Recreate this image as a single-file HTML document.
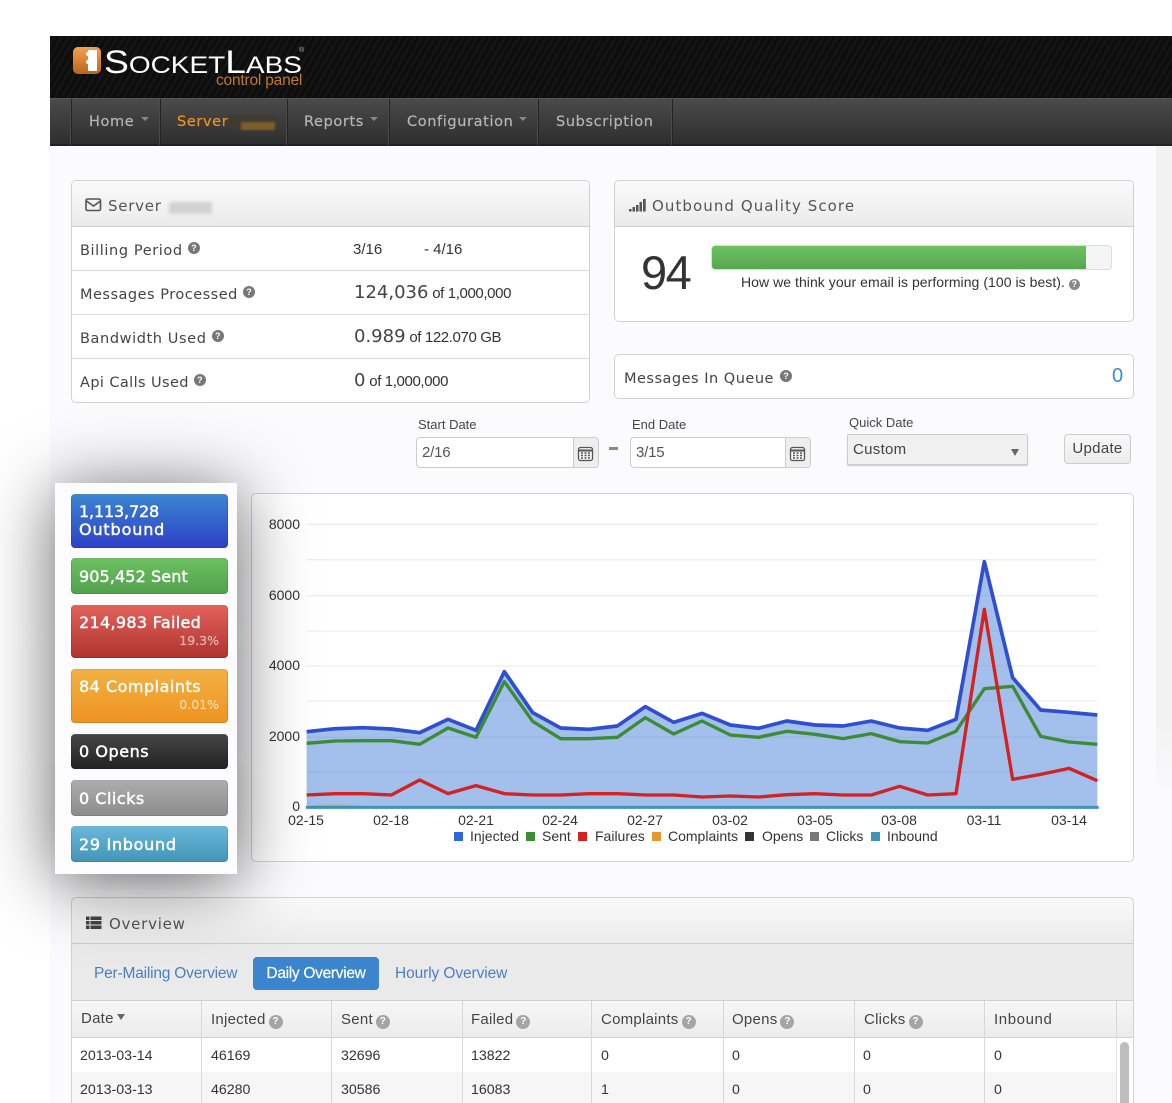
<!DOCTYPE html>
<html><head><meta charset="utf-8"><title>SocketLabs</title>
<style>
*{box-sizing:border-box}
html,body{margin:0;padding:0;background:#fff}
#p{position:relative;width:1172px;height:1103px;overflow:hidden;background:#fff;font-family:"Liberation Sans",sans-serif;color:#333;filter:blur(.3px)}
#p div,#p span.a{position:absolute}
.panel{background:#fff;border:1px solid #d2d2d2;border-radius:5px}
.ph{left:0;right:0;top:0;height:46px;background:linear-gradient(#fafafa,#ebebeb);border-bottom:1px solid #ccc;border-radius:5px 5px 0 0}
.t{white-space:nowrap}
.h{font-family:"DejaVu Sans",sans-serif;font-size:15px;color:#555;letter-spacing:.75px;white-space:nowrap}
.l{font-family:"DejaVu Sans",sans-serif;font-size:14.5px;color:#444;letter-spacing:.6px;white-space:nowrap}
.v{font-size:15px;color:#333;white-space:nowrap;letter-spacing:-.38px}
.v b{font-family:"DejaVu Sans",sans-serif;font-weight:normal;font-size:18px;color:#444;letter-spacing:0}
.r{height:1px;background:#ddd}
.q{display:inline-block;width:12px;height:12px;border-radius:50%;background:#777;color:#fff;font:bold 9px/12px "Liberation Sans",sans-serif;text-align:center;letter-spacing:0;vertical-align:4px;margin-left:0}
.btn{left:71px;width:157px;border-radius:4px;color:#fff;font:normal 16px/18px "DejaVu Sans",sans-serif;-webkit-text-stroke:.45px #fff;letter-spacing:.1px;padding-left:8px;box-shadow:inset 0 0 0 1px rgba(0,0,0,.1),inset 0 1px 0 rgba(255,255,255,.15);white-space:nowrap}
.pc{right:9px;font:normal 12.5px/14px "DejaVu Sans",sans-serif;-webkit-text-stroke:.2px rgba(255,255,255,.55);letter-spacing:0;color:rgba(255,255,255,.55)}
.nav{top:113px;font:14.5px/18px "DejaVu Sans",sans-serif;letter-spacing:.62px;-webkit-text-stroke:.2px #b5b5b5;color:#b5b5b5;white-space:nowrap}
.sep{top:99px;width:1px;height:46px;background:#232323;box-shadow:-1px 0 0 #4b4b4b}
.car{top:117px;width:0;height:0;border:4px solid transparent;border-top:4px solid #888;border-bottom:0}
.lab{font-size:13px;color:#444;white-space:nowrap}
.inp{background:#fff;border:1px solid #ccc;border-radius:4px;height:31px;font-size:15px;color:#555;line-height:29px;padding-left:5px;letter-spacing:-.2px}
.add{top:0;right:0;bottom:0;width:25px;background:#eee;border-left:1px solid #ccc;border-radius:0 4px 4px 0}
.c{font-size:14.2px;color:#333;white-space:nowrap}
.th{font-size:15px;color:#444;white-space:nowrap;top:1011px;letter-spacing:.25px}
.vl{top:1001px;width:1px;height:102px;background:#d8d8d8}
.qt{display:inline-block;width:14px;height:14px;border-radius:50%;background:#a5a5a5;color:#fff;font:bold 10px/14px "Liberation Sans",sans-serif;text-align:center;letter-spacing:0;vertical-align:0;margin-left:3px}
svg text{font-family:"Liberation Sans",sans-serif}
</style></head><body>
<div id="p">
<div style="left:50px;top:36px;width:1122px;height:1067px;background:#fbfbfd"></div>
<div style="left:1156px;top:146px;width:16px;height:654px;background:linear-gradient(#f2f2f2 88%,#fbfbfd)"></div>

<!-- header -->
<div style="left:50px;top:36px;width:1122px;height:62px;background:repeating-linear-gradient(120deg,#0d0d0d 0 3px,#141414 3px 6px)"></div>
<svg style="position:absolute;left:72px;top:46px" width="31" height="30" viewBox="0 0 31 30"><defs><linearGradient id="o" x1="0" y1="0" x2="0" y2="1"><stop offset="0" stop-color="#f6a050"/><stop offset="1" stop-color="#b9661c"/></linearGradient></defs><rect x="1" y="1" width="28" height="27" rx="5" fill="url(#o)"/><path d="M16 4H25V25H16V18a2 2 0 0 1 0-4V10a2 2 0 0 1 0-4z" fill="#fff"/></svg>
<div class="t" style="left:104px;top:44px;color:#fff;font-size:32px;line-height:36px;font-weight:normal;letter-spacing:0;transform:scaleX(1.165);transform-origin:0 0">S<span style="font-size:24px">OCKET</span>L<span style="font-size:24px">ABS</span></div>
<div class="t" style="left:299px;top:47px;color:#bbb;font-size:7px">®</div>
<div class="t" style="left:216px;top:72px;color:#c07a24;font-size:15.5px;line-height:18px;letter-spacing:-.2px">control panel</div>

<!-- nav -->
<div style="left:50px;top:98px;width:1122px;height:48px;background:linear-gradient(#4a4a4a,#2e2e2e);border-bottom:2px solid #222;border-top:1px solid #555"></div>
<div class="sep" style="left:71px"></div><div class="sep" style="left:160px"></div><div class="sep" style="left:287px"></div><div class="sep" style="left:389px"></div><div class="sep" style="left:538px"></div><div class="sep" style="left:672px"></div>
<div class="nav" style="left:89px">Home</div><div class="car" style="left:141px"></div>
<div class="nav" style="left:177px;color:#f0921e;-webkit-text-stroke:.2px #f0921e">Server</div>
<div style="left:229px;top:115px;width:46px;height:15px;background:#3f3a32;filter:blur(1px)"></div>
<div style="left:241px;top:122px;width:34px;height:8px;background:#7e5f2a;filter:blur(1px)"></div>
<div class="nav" style="left:304px">Reports</div><div class="car" style="left:370px"></div>
<div class="nav" style="left:407px">Configuration</div><div class="car" style="left:519px"></div>
<div class="nav" style="left:556px">Subscription</div>

<!-- server panel -->
<div class="panel" style="left:71px;top:180px;width:519px;height:223px"><div class="ph"></div></div>
<svg style="position:absolute;left:85px;top:198px" width="17" height="14" viewBox="0 0 17 14"><rect x="1" y="1" width="14.5" height="11.5" rx="1.5" fill="none" stroke="#555" stroke-width="1.6"/><path d="M1.5 3l7 5 7-5" fill="none" stroke="#555" stroke-width="1.6"/></svg>
<div class="h" style="left:108px;top:197px">Server</div>
<div style="left:169px;top:202px;width:43px;height:12px;background:#d2d2d2;filter:blur(1.5px)"></div>
<div class="r" style="left:72px;top:270px;width:517px"></div><div class="r" style="left:72px;top:314px;width:517px"></div><div class="r" style="left:72px;top:358px;width:517px"></div>
<div class="l" style="left:80px;top:242px">Billing Period <span class="q">?</span></div>
<div class="l" style="left:80px;top:286px;letter-spacing:.5px">Messages Processed <span class="q">?</span></div>
<div class="l" style="left:80px;top:330px">Bandwidth Used <span class="q">?</span></div>
<div class="l" style="left:80px;top:374px;letter-spacing:.4px">Api Calls Used <span class="q">?</span></div>
<div class="v" style="left:353px;top:241px;letter-spacing:0">3/16</div><div class="v" style="left:424px;top:241px;letter-spacing:0">- 4/16</div>
<div class="v" style="left:354px;top:282px"><b>124,036</b> of 1,000,000</div>
<div class="v" style="left:354px;top:326px"><b>0.989</b> of 122.070 GB</div>
<div class="v" style="left:354px;top:370px"><b>0</b> of 1,000,000</div>

<!-- quality -->
<div class="panel" style="left:614px;top:180px;width:520px;height:142px"><div class="ph"></div></div>
<svg style="position:absolute;left:629px;top:199px" width="17" height="13" viewBox="0 0 17 13"><path d="M0 10h2.500v2.500H0zM3.500 8h2.500v4.500H3.500zM7 6h2.500v6.500H7zM10.500 3h2.500v9.500h-2.500zM14 0h2.700v12.500H14z" fill="#555"/></svg>
<div class="h" style="left:652px;top:197px;letter-spacing:1.07px">Outbound Quality Score</div>
<div class="t" style="left:641px;top:246px;font-size:47px;line-height:54px;color:#333;letter-spacing:-1.5px">94</div>
<div style="left:711px;top:245px;width:401px;height:25px;background:#f5f5f5;border:1px solid #ddd;border-radius:4px"></div>
<div style="left:712px;top:246px;width:374px;height:23px;background:linear-gradient(#6cc160,#57a651);border-radius:3px 0 0 3px"></div>
<div class="t" style="left:741px;top:274px;font-size:14px;line-height:17px;color:#333;letter-spacing:.05px">How we think your email is performing (100 is best). <span class="q" style="vertical-align:0;margin-left:0;background:#888;width:11px;height:11px;line-height:11px">?</span></div>

<!-- queue -->
<div class="panel" style="left:614px;top:354px;width:520px;height:45px"></div>
<div class="l" style="left:624px;top:370px;letter-spacing:.5px">Messages In Queue <span class="q" style="margin-left:1px">?</span></div>
<div class="t" style="left:1112px;top:364px;font-size:20px;line-height:24px;color:#3b8bd0">0</div>

<!-- date form -->
<div class="lab" style="left:418px;top:417px">Start Date</div>
<div class="inp" style="left:416px;top:437px;width:183px">2/16<div class="add"></div></div>
<svg style="position:absolute;left:577px;top:445px" width="17" height="17" viewBox="0 0 17 17"><rect x="1.500" y="2.500" width="14" height="13" rx="2" fill="#f7f7f7" stroke="#555" stroke-width="1.300"/><path d="M2 5.500h13" stroke="#555" stroke-width="2"/><path d="M4 8h2M7.500 8h2M11 8h2M4 10.500h2M7.500 10.500h2M11 10.500h2M4 13h2M7.500 13h2M11 13h2" stroke="#555" stroke-width="1.500"/></svg>
<div style="left:609px;top:447px;width:9px;height:2.500px;background:#888"></div>
<div class="lab" style="left:632px;top:417px">End Date</div>
<div class="inp" style="left:630px;top:437px;width:181px">3/15<div class="add"></div></div>
<svg style="position:absolute;left:789px;top:445px" width="17" height="17" viewBox="0 0 17 17"><rect x="1.500" y="2.500" width="14" height="13" rx="2" fill="#f7f7f7" stroke="#555" stroke-width="1.300"/><path d="M2 5.500h13" stroke="#555" stroke-width="2"/><path d="M4 8h2M7.500 8h2M11 8h2M4 10.500h2M7.500 10.500h2M11 10.500h2M4 13h2M7.500 13h2M11 13h2" stroke="#555" stroke-width="1.500"/></svg>
<div class="lab" style="left:849px;top:415px">Quick Date</div>
<div style="left:847px;top:434px;width:181px;height:31px;background:#f0f0f0;border:1px solid #ccc;border-radius:2px;box-shadow:0 1px 1px #ccc;font:15px/29px 'Liberation Sans',sans-serif;color:#444;padding-left:5px;letter-spacing:.3px">Custom</div>
<div style="left:1011px;top:449px;width:0;height:0;border:4px solid transparent;border-top:7px solid #666;border-bottom:0"></div>
<div style="left:1064px;top:434px;width:67px;height:30px;background:linear-gradient(#f8f8f8,#ececec);border:1px solid #ccc;border-radius:4px;font:15px/28px 'Liberation Sans',sans-serif;color:#444;text-align:center;letter-spacing:.3px">Update</div>

<!-- chart -->
<div class="panel" style="left:251px;top:493px;width:883px;height:369px"></div>
<svg style="position:absolute;left:0;top:0" width="1172" height="1103" viewBox="0 0 1172 1103">
<g transform="translate(250 490) scale(.33333)">
<g stroke="#eee" stroke-width="4"><path d="M170 103H2542M170 209H2542M170 317H2542M170 423H2542M170 528H2542M170 633H2542M170 742H2542M170 847H2542"/></g>
<path d="M170 725L255 716 339 713 424 717 509 728 594 688 678 721 763 545 848 668 932 714 1017 718 1102 708 1186 650 1271 697 1356 670 1441 705 1525 715 1610 693 1695 705 1779 708 1864 693 1949 714 2033 721 2118 688 2203 215 2288 563 2372 660 2457 667 2542 675V952H170Z" fill="#3e7ad6" opacity=".48"/>
<polyline fill="none" stroke="#2f4fd0" stroke-width="11" stroke-linejoin="round" points="170,725 255,716 339,713 424,717 509,728 594,688 678,721 763,545 848,668 932,714 1017,718 1102,708 1186,650 1271,697 1356,670 1441,705 1525,715 1610,693 1695,705 1779,708 1864,693 1949,714 2033,721 2118,688 2203,215 2288,563 2372,660 2457,667 2542,675"/>
<polyline fill="none" stroke="#3c8b35" stroke-width="10" stroke-linejoin="round" points="170,760 255,753 339,752 424,752 509,763 594,714 678,742 763,575 848,694 932,746 1017,746 1102,742 1186,683 1271,732 1356,693 1441,735 1525,742 1610,724 1695,733 1779,746 1864,731 1949,755 2033,759 2118,724 2203,596 2288,589 2372,739 2457,756 2542,763"/>
<polyline fill="none" stroke="#d32222" stroke-width="10" stroke-linejoin="round" points="170,915 255,911 339,911 424,915 509,870 594,911 678,887 763,911 848,915 932,915 1017,911 1102,911 1186,915 1271,915 1356,921 1441,918 1525,921 1610,914 1695,911 1779,915 1864,915 1949,889 2033,915 2118,911 2203,358 2288,868 2372,853 2457,835 2542,872"/>
<path d="M170 948Q250 938 340 948Z" fill="#e39a3b" opacity=".6"/>
<path d="M168 952H2546" stroke="#3f93b5" stroke-width="9"/>
</g>
<g font-size="14" fill="#333" text-anchor="end">
<text x="300" y="529">8000</text><text x="300" y="600">6000</text><text x="300" y="670">4000</text><text x="300" y="741">2000</text><text x="300" y="811">0</text>
</g>
<g font-size="14" fill="#333" text-anchor="middle">
<text x="306" y="825">02-15</text><text x="391" y="825">02-18</text><text x="476" y="825">02-21</text><text x="560" y="825">02-24</text><text x="645" y="825">02-27</text><text x="730" y="825">03-02</text><text x="815" y="825">03-05</text><text x="899" y="825">03-08</text><text x="984" y="825">03-11</text><text x="1069" y="825">03-14</text>
</g>
<g font-size="14" fill="#333">
<rect x="454" y="832" width="9" height="9" fill="#2f66d8"/><text x="470" y="841">Injected</text>
<rect x="526" y="832" width="9" height="9" fill="#3c8b35"/><text x="542" y="841">Sent</text>
<rect x="578" y="832" width="9" height="9" fill="#d32222"/><text x="595" y="841">Failures</text>
<rect x="652" y="832" width="9" height="9" fill="#e8962e"/><text x="668" y="841">Complaints</text>
<rect x="745" y="832" width="9" height="9" fill="#333"/><text x="762" y="841">Opens</text>
<rect x="810" y="832" width="9" height="9" fill="#777"/><text x="826" y="841">Clicks</text>
<rect x="871" y="832" width="9" height="9" fill="#3f93b5"/><text x="887" y="841">Inbound</text>
</g>
</svg>

<!-- overview -->
<div class="panel" style="left:71px;top:897px;width:1063px;height:230px;background:#eaeaea"><div class="ph"></div></div>
<svg style="position:absolute;left:85px;top:916px" width="17" height="14" viewBox="0 0 17 14"><path d="M1 .5h3.500v3.500H1zM5.500 .5h11v3.500H5.500zM1 5h3.500v3.500H1zM5.500 5h11v3.500H5.500zM1 9.500h3.500v3.500H1zM5.500 9.500h11v3.500H5.500z" fill="#444"/></svg>
<div class="h" style="left:109px;top:915px">Overview</div>
<div class="t" style="left:94px;top:965px;font-size:15.5px;line-height:18px;color:#4a7fc7;letter-spacing:-.2px">Per-Mailing Overview</div>
<div style="left:253px;top:957px;width:126px;height:33px;background:#3a85ce;border-radius:4px;color:#fff;font:15.5px/33px 'Liberation Sans',sans-serif;text-align:center;letter-spacing:-.3px;-webkit-text-stroke:.2px #fff">Daily Overview</div>
<div class="t" style="left:395px;top:965px;font-size:15.5px;line-height:18px;color:#4a7fc7;letter-spacing:-.1px">Hourly Overview</div>

<div style="left:72px;top:1000px;width:1061px;height:38px;background:linear-gradient(#f6f6f6,#ececec);border-top:1px solid #d0d0d0;border-bottom:1px solid #d0d0d0"></div>
<div style="left:72px;top:1038px;width:1061px;height:34px;background:#fff"></div>
<div style="left:72px;top:1072px;width:1061px;height:31px;background:#f6f6f6"></div>
<div style="left:1116px;top:1038px;width:17px;height:65px;background:#fff;border-left:1px solid #e4e4e4"></div>
<div style="left:1120px;top:1042px;width:9px;height:61px;background:#bdbdbd;border-radius:5px 5px 0 0"></div>
<div class="vl" style="left:201px"></div><div class="vl" style="left:331px"></div><div class="vl" style="left:462px"></div><div class="vl" style="left:591px"></div><div class="vl" style="left:723px"></div><div class="vl" style="left:854px"></div><div class="vl" style="left:984px"></div><div class="vl" style="left:1116px;height:37px"></div>

<div class="th" style="left:81px;top:1010px">Date</div><div style="left:117px;top:1014px;width:0;height:0;border:4px solid transparent;border-top:6px solid #666;border-bottom:0"></div>
<div class="th" style="left:211px">Injected<span class="qt">?</span></div>
<div class="th" style="left:341px">Sent<span class="qt">?</span></div>
<div class="th" style="left:471px">Failed<span class="qt">?</span></div>
<div class="th" style="left:601px">Complaints<span class="qt">?</span></div>
<div class="th" style="left:732px">Opens<span class="qt">?</span></div>
<div class="th" style="left:864px">Clicks<span class="qt">?</span></div>
<div class="th" style="left:994px;letter-spacing:.6px">Inbound</div>

<div class="c" style="left:80px;top:1048px">2013-03-14</div><div class="c" style="left:211px;top:1048px">46169</div><div class="c" style="left:341px;top:1048px">32696</div><div class="c" style="left:471px;top:1048px">13822</div><div class="c" style="left:601px;top:1048px">0</div><div class="c" style="left:732px;top:1048px">0</div><div class="c" style="left:863px;top:1048px">0</div><div class="c" style="left:994px;top:1048px">0</div>
<div class="c" style="left:80px;top:1082px">2013-03-13</div><div class="c" style="left:211px;top:1082px">46280</div><div class="c" style="left:341px;top:1082px">30586</div><div class="c" style="left:471px;top:1082px">16083</div><div class="c" style="left:601px;top:1082px">1</div><div class="c" style="left:732px;top:1082px">0</div><div class="c" style="left:863px;top:1082px">0</div><div class="c" style="left:994px;top:1082px">0</div>

<!-- stats -->
<div style="left:55px;top:483px;width:182px;height:391px;background:#fcfcfe;box-shadow:0 8px 70px rgba(0,0,0,.62)"></div>
<div class="btn" style="top:494px;height:54px;padding-top:9px;background:linear-gradient(#3a86d0,#2e3fc8)"><span style="letter-spacing:-.15px">1,113,728</span><br><span style="letter-spacing:.85px">Outbound</span></div>
<div class="btn" style="top:558px;height:36px;line-height:37px;background:linear-gradient(#6bc160,#52a04c)">905,452 Sent</div>
<div class="btn" style="top:605px;height:53px;padding-top:9px;letter-spacing:.32px;background:linear-gradient(#e3625c,#ae332e)">214,983 Failed<div class="pc" style="top:29px">19.3%</div></div>
<div class="btn" style="top:669px;height:54px;padding-top:9px;letter-spacing:.5px;background:linear-gradient(#f3b143,#ee9320)">84 Complaints<div class="pc" style="top:29px">0.01%</div></div>
<div class="btn" style="top:734px;height:35px;line-height:36px;letter-spacing:.55px;background:linear-gradient(#454545,#222)">0 Opens</div>
<div class="btn" style="top:780px;height:36px;line-height:37px;letter-spacing:.5px;background:linear-gradient(#adadad,#8c8c8c)">0 Clicks</div>
<div class="btn" style="top:826px;height:36px;line-height:37px;letter-spacing:.7px;background:linear-gradient(#69b9db,#4494b9)">29 Inbound</div>
</div>
</body></html>
